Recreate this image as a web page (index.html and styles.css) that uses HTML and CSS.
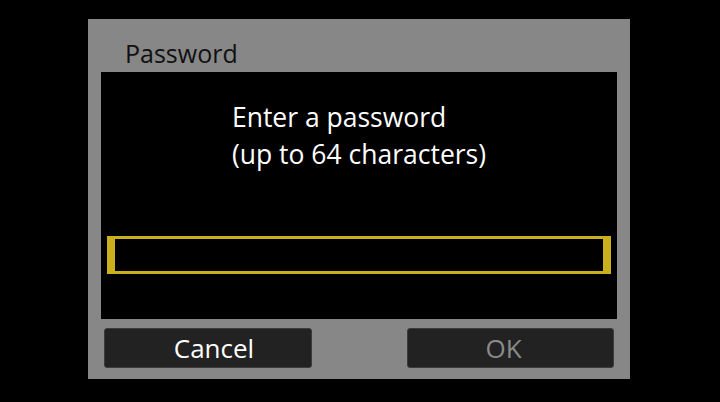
FILE: index.html
```html
<!DOCTYPE html>
<html lang="en">
<head>
    <meta charset="UTF-8">
    <title>Password</title>
    <link rel="stylesheet" href="styles.css">
</head>
<body>
    <div class="dialog">
        <div class="title">Password</div>
        <div class="screen">
            <div class="prompt">
                <p>Enter a password<br>(up to 64 characters)</p>
            </div>
            <div class="field"></div>
        </div>
        <div class="buttons">
            <button type="button" class="btn cancel">Cancel</button>
            <button type="button" class="btn ok" disabled>OK</button>
        </div>
    </div>
</body>
</html>
```

FILE: styles.css
```css
html, body{
    margin: 0;
    height: 100%;
    background-color: #000;
}
body *{
    font-family: "Open Sans", "Noto Sans", sans-serif;
}

div.dialog{
    width: 542px;
    height: 360px;
    margin: 19px 0 0 88px;
    padding: 0 13px;
    box-sizing: border-box;
    background-color: #878787;
}

div.dialog div.title{
    height: 53px;
    padding: 15px 0 0 24px;
    box-sizing: border-box;
    font-size: 25px;
    line-height: 38px;
    color: #111;
}

div.dialog div.screen{
    height: 247px;
    padding: 27px 6px 0;
    box-sizing: border-box;
    background-color: #000;
}

div.screen div.prompt{
    text-align: center;
}
div.screen div.prompt p{
    display: inline-block;
    margin: 0;
    text-align: left;
    font-size: 26.5px;
    line-height: 37px;
    color: #fff;
}

div.screen div.field{
    height: 38px;
    margin-top: 63px;
    border: 3px solid #c9b01c;
    border-left-width: 8px;
    border-right-width: 8px;
    box-sizing: border-box;
}

div.dialog div.buttons{
    display: flex;
    justify-content: space-between;
    padding: 9px 3px 0;
}

.btn{
    width: 208px;
    height: 40px;
    padding: 0;
    background-color: #222;
    border: 1px solid #3c3c3c;
    border-radius: 3px;
    font-size: 26px;
    line-height: 36px;
    color: #fff;
}
.btn.cancel{
    padding-left: 12px;
}
.btn.ok{
    width: 207px;
    padding-right: 14px;
    color: #8a8a8a;
}
```
